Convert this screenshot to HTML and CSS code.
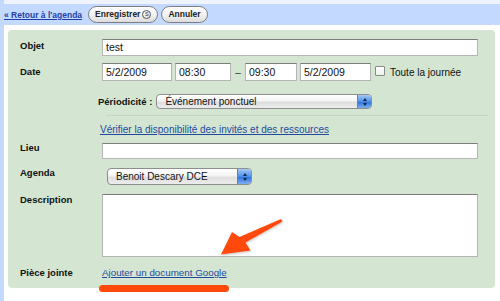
FILE: index.html
```html
<!DOCTYPE html>
<html lang="fr">
<head>
<meta charset="utf-8">
<title>Modifier l'événement</title>
<link rel="stylesheet" href="styles.css">
</head>
<body>
<div class="page">
  <div class="topbar">
    <a class="back" href="#">« Retour à l'agenda</a>
    <span class="btn">Enregistrer <span class="key">S</span></span>
    <span class="btn">Annuler</span>
  </div>
  <div class="panel">
    <div class="row row-objet">
      <div class="lbl">Objet</div>
      <div class="input full">test</div>
    </div>
    <div class="row row-date">
      <div class="lbl lbl-date">Date</div>
      <div class="dates">
        <div class="input d1">5/2/2009</div>
        <div class="input t1">08:30</div>
        <span class="dash">–</span>
        <div class="input t2">09:30</div>
        <div class="input d2">5/2/2009</div>
        <span class="check"></span>
        <span class="allday">Toute la journée</span>
      </div>
    </div>
    <div class="row row-period">
      <div class="plbl">Périodicité :</div>
      <div class="select sel-period"><span class="seltext">Événement ponctuel</span><span class="arrows"><i class="up"></i><i class="down"></i></span></div>
    </div>
    <div class="sep"></div>
    <div class="row row-link">
      <a class="link" href="#">Vérifier la disponibilité des invités et des ressources</a>
    </div>
    <div class="row row-lieu">
      <div class="lbl lbl-up">Lieu</div>
      <div class="input full lieu"></div>
    </div>
    <div class="row row-agenda">
      <div class="lbl lbl-up">Agenda</div>
      <div class="select sel-agenda"><span class="seltext">Benoit Descary DCE</span><span class="arrows"><i class="up"></i><i class="down"></i></span></div>
    </div>
    <div class="row row-desc">
      <div class="lbl lbl-desc">Description</div>
      <div class="textarea"></div>
    </div>
    <div class="row row-pj">
      <div class="lbl lbl-pj">Pièce jointe</div>
      <a class="link link-pj" href="#">Ajouter un document Google</a>
    </div>
  </div>
</div>
<svg class="annot" width="500" height="301" viewBox="0 0 500 301" xmlns="http://www.w3.org/2000/svg">
  <defs>
    <filter id="sh" x="-20%" y="-20%" width="140%" height="140%">
      <feDropShadow dx="0.5" dy="1" stdDeviation="0.8" flood-color="#000" flood-opacity="0.25"/>
    </filter>
  </defs>
  <polygon filter="url(#sh)" fill="#ff4a0c" points="281,219 282.5,221.5 245.5,242.5 250.5,250.5 221,254.5 232,232 239.5,237"/>
  <rect x="99" y="285" width="130" height="7" rx="3.5" fill="#ff4a0c"/>
</svg>
</body>
</html>
```

FILE: styles.css
```css
html, body {
  margin: 0;
  padding: 0;
}
body {
  position: relative;
  width: 500px;
  height: 301px;
  overflow: hidden;
  background: #ffffff;
  font-family: "Liberation Sans", Arial, Helvetica, sans-serif;
  color: #000;
}
.page {
  height: 301px;
  box-sizing: border-box;
  border-left: 4px solid #c3d9ff;
  padding-top: 4px;
  background: linear-gradient(#eef3fd 0, #eef3fd 4px, #ffffff 4px);
}
.topbar {
  height: 21px;
  margin-left: -4px;
  padding-left: 4px;
  background: #c3d9ff;
  display: flex;
  align-items: center;
}
.back {
  font-size: 8.5px;
  font-weight: bold;
  color: #1f3fa6;
  text-decoration: underline;
  margin-right: 6px;
}
.btn {
  height: 17px;
  box-sizing: border-box;
  border: 1px solid #7d7d7d;
  border-radius: 9px;
  background: linear-gradient(#ffffff, #f2f2f2 50%, #dcdcdc);
  font-size: 8.5px;
  font-weight: bold;
  color: #222;
  display: inline-flex;
  align-items: center;
  padding: 0 6px;
  margin-right: 3px;
  margin-top: -1px;
}
.key {
  display: inline-flex;
  align-items: center;
  justify-content: center;
  width: 7px;
  height: 7px;
  border: 1px solid #555;
  border-radius: 50%;
  font-size: 5.5px;
  font-weight: normal;
  margin-left: 2px;
}
.panel {
  position: relative;
  margin: 5px 0 0 4px;
  width: 487px;
  height: 258px;
  box-sizing: border-box;
  padding: 9px 0 0 12px;
  background: #d4e6d1;
  border-radius: 4px;
}
.row {
  display: flex;
  align-items: flex-start;
}
.lbl {
  width: 82px;
  flex: none;
  font-size: 9.5px;
  font-weight: bold;
  line-height: 14px;
  color: #111;
}
.lbl-date { padding-top: 2px; }
.lbl-up { margin-top: -2px; }
.lbl-desc { margin-top: -1px; }
.lbl-pj { line-height: 12px; }
.input {
  box-sizing: border-box;
  height: 17px;
  background: #fff;
  border: 1px solid #b5b5b5;
  border-top-color: #7c7c7c;
  font-size: 10.5px;
  line-height: 15px;
  padding-left: 3px;
  color: #111;
}
.full { width: 376px; }
.lieu { height: 16px; }
.row-date { margin-top: 7px; }
.dates {
  display: flex;
  align-items: center;
}
.dates .input { height: 18px; line-height: 16px; }
.d1 { width: 70px; }
.t1 { width: 56px; margin-left: 3px; }
.dash { width: 14px; text-align: center; font-size: 10px; color: #333; }
.t2 { width: 52px; }
.d2 { width: 71px; margin-left: 3px; }
.check {
  width: 8px;
  height: 8px;
  border: 1px solid #8a8a8a;
  border-radius: 1px;
  background: linear-gradient(#ffffff, #eeeeee);
  margin-left: 4px;
  margin-top: -3px;
}
.allday {
  font-size: 10px;
  margin-left: 5px;
  color: #111;
}
.row-period {
  margin-top: 13px;
  padding-left: 78px;
  align-items: center;
}
.plbl {
  font-size: 9.5px;
  font-weight: bold;
  color: #111;
  margin-right: 4px;
}
.select {
  position: relative;
  box-sizing: border-box;
  border: 1px solid #8e8e8e;
  border-radius: 4px;
  background: linear-gradient(#ffffff, #f4f4f4 45%, #dedede 55%, #ececec);
  display: flex;
  align-items: center;
  overflow: hidden;
}
.seltext {
  flex: 1;
  font-size: 10px;
  padding-left: 8px;
  color: #111;
}
.arrows {
  width: 13px;
  align-self: stretch;
  background: linear-gradient(#a6c8f4, #4f8fe6 50%, #2f72d8 55%, #7fb0f0);
  border-left: 1px solid #5a84c0;
  display: flex;
  flex-direction: column;
  align-items: center;
  justify-content: center;
  gap: 2px;
}
.arrows i {
  display: block;
  width: 0;
  height: 0;
  border-left: 2px solid transparent;
  border-right: 2px solid transparent;
}
.arrows .up { border-bottom: 3px solid #10294f; }
.arrows .down { border-top: 3px solid #10294f; }
.sel-period { width: 216px; height: 15px; }
.sep {
  height: 1px;
  background: #c4d6c1;
  margin: 6px 0 0 86px;
  width: 382px;
}
.row-link {
  margin-top: 8px;
  padding-left: 80px;
  line-height: 12px;
}
.link {
  font-size: 10px;
  color: #1f4aa0;
  text-decoration: underline;
  line-height: 12px;
}
.link-pj { font-size: 9.8px; }
.row-lieu { margin-top: 7px; }
.row-agenda { margin-top: 9px; }
.sel-agenda { width: 145px; height: 17px; margin-left: 5px; }
.row-desc { margin-top: 9px; }
.textarea {
  width: 376px;
  height: 63px;
  box-sizing: border-box;
  background: #fff;
  border: 1px solid #b5b5b5;
  border-top-color: #7c7c7c;
}
.row-pj { margin-top: 10px; }
.annot {
  position: absolute;
  left: 0;
  top: 0;
  pointer-events: none;
}
```
